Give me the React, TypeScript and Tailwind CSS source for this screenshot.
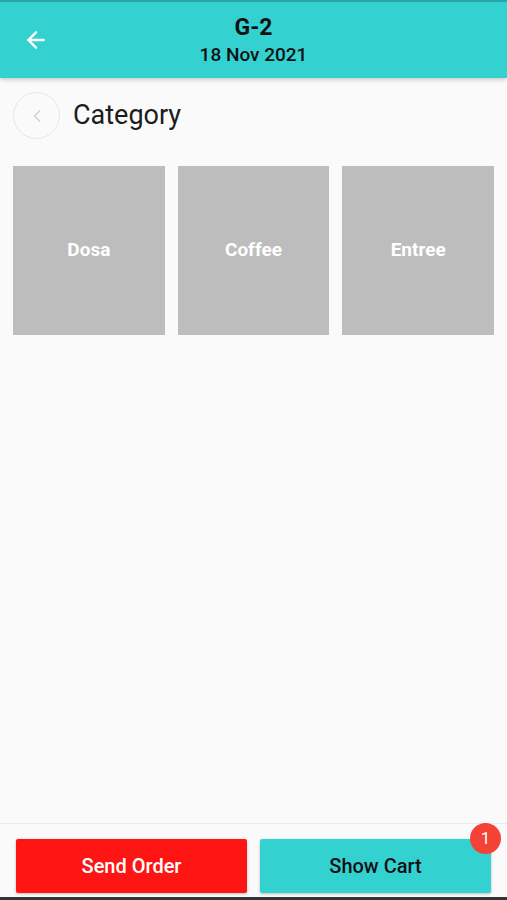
import { ArrowLeft, ChevronLeft } from 'lucide-react';

const categories = ['Dosa', 'Coffee', 'Entree'];

export default function App() {
  return (
    <div
      className="flex h-[900px] w-full flex-col overflow-hidden bg-[#fafafa]"
      style={{ fontFamily: 'Roboto, "Noto Sans", sans-serif' }}
    >
      <div className="h-[2px] bg-[#27a9a6]" />
      <header className="relative flex h-[76px] shrink-0 flex-col items-center justify-center bg-[#34d1d1] shadow-[0_2px_4px_rgba(0,0,0,0.18)]">
        <button className="absolute left-[23px] top-[25px] text-white">
          <ArrowLeft className="h-[26px] w-[26px]" strokeWidth={2.2} />
        </button>
        <h1 className="mt-[1px] text-[23px] font-bold leading-[26px] text-[#111]">G-2</h1>
        <p className="mt-[2px] text-[19px] font-medium leading-[24px] text-[#111]">18 Nov 2021</p>
      </header>

      <main className="flex-1 px-[13px]">
        <div className="mt-[14px] flex items-center gap-[13px]">
          <button className="flex h-[47px] w-[47px] items-center justify-center rounded-full border border-[#e6e6e6] text-[#cfcfcf]">
            <ChevronLeft className="h-[20px] w-[20px]" strokeWidth={1.6} />
          </button>
          <h2 className="text-[27px] leading-none text-[#1c1c1c]">Category</h2>
        </div>

        <div className="mt-[27px] grid grid-cols-3 gap-[13px]">
          {categories.map((c) => (
            <div
              key={c}
              className="flex h-[169px] items-center justify-center bg-[#bdbdbd] text-[19px] font-bold text-white"
            >
              {c}
            </div>
          ))}
        </div>
      </main>

      <footer className="flex h-[74px] shrink-0 gap-[13px] border-t border-[#ececec] bg-[#fafafa] px-[16px] pt-[15px]">
        <button className="h-[54px] flex-1 rounded-[2px] bg-[#ff1414] text-[20px] font-medium text-white shadow-[0_1px_3px_rgba(0,0,0,0.25)]">
          Send Order
        </button>
        <div className="relative flex-1">
          <button className="h-[54px] w-full rounded-[2px] bg-[#34d1d1] text-[20px] font-medium text-[#111] shadow-[0_1px_3px_rgba(0,0,0,0.25)]">
            Show Cart
          </button>
          <span className="absolute -right-[10px] -top-[16px] flex h-[31px] w-[31px] items-center justify-center rounded-full bg-[#f44336] text-[17px] text-white">
            1
          </span>
        </div>
      </footer>
      <div className="h-[3px] bg-[#333]" />
    </div>
  );
}
